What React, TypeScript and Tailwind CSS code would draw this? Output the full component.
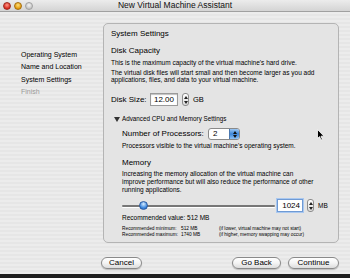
import React from 'react';

const font = { fontFamily: '"Liberation Sans", Arial, sans-serif' };

const steps = [
  { label: 'Operating System', done: true },
  { label: 'Name and Location', done: true },
  { label: 'System Settings', done: true },
  { label: 'Finish', done: false },
];

const Stepper: React.FC = () => (
  <div className="flex flex-col w-[7px] h-[13px] rounded-[3px] border border-[#8c8c8c] bg-gradient-to-b from-white to-[#dcdcdc] items-center justify-center gap-[2px]">
    <svg width="4" height="3" viewBox="0 0 4 3"><path d="M2 0 L4 3 L0 3 Z" fill="#222" /></svg>
    <svg width="4" height="3" viewBox="0 0 4 3"><path d="M0 0 L4 0 L2 3 Z" fill="#222" /></svg>
  </div>
);

const AquaButton: React.FC<{ label: string; w: string }> = ({ label, w }) => (
  <button className={`${w} h-[12px] rounded-full border border-[#8a8a8a] bg-gradient-to-b from-white via-[#f4f4f4] to-[#dcdcdc] text-[8px] leading-[10px] text-black shadow-[0_1px_1px_rgba(0,0,0,0.2)]`}>
    {label}
  </button>
);

export default function App() {
  return (
    <div
      style={font}
      className="relative w-[350px] h-[278px] overflow-hidden flex flex-col bg-[repeating-linear-gradient(0deg,#ececec_0px,#ececec_2px,#e6e6e6_2px,#e6e6e6_4px)] text-black"
    >
      {/* title bar */}
      <div className="relative h-[12px] shrink-0 flex items-center justify-center border-b border-[#a0a0a0] bg-gradient-to-b from-[#ececec] to-[#d4d4d4]">
        <div className="absolute left-[3px] top-[2px] flex gap-[3px]">
          <span className="w-[8px] h-[8px] rounded-full bg-[radial-gradient(circle_at_50%_35%,#ff9a8a,#d8261b_70%)] border border-[#9c2a20]" />
          <span className="w-[8px] h-[8px] rounded-full bg-[radial-gradient(circle_at_50%_35%,#ffe07a,#e29a0a_70%)] border border-[#a46d10]" />
          <span className="w-[8px] h-[8px] rounded-full bg-[radial-gradient(circle_at_50%_35%,#f4f4f4,#c4c4c4_70%)] border border-[#a0a0a0]" />
        </div>
        <span className="text-[8.5px] leading-[11px] text-[#111]">New Virtual Machine Assistant</span>
      </div>

      <div className="flex mt-[11px] h-[220px]">
        {/* sidebar */}
        <div className="w-[103px] shrink-0 pl-[21px] pt-[26px] flex flex-col">
          {steps.map((s) => (
            <div key={s.label} className={`h-[12.4px] leading-[12px] text-[7px] ${s.done ? 'text-black' : 'text-[#9a9a9a]'}`}>
              {s.label}
            </div>
          ))}
        </div>

        {/* panel */}
        <div className="w-[236px] h-[220px] rounded-[5px] border border-[#b4b4b4] bg-[#e4e4e4] flex flex-col pl-[7px] pr-[4px] text-black">
          <div className="mt-[5px] h-[10px] leading-[10px] text-[8px]">System Settings</div>
          <div className="mt-[7px] h-[10px] leading-[10px] text-[8px]">Disk Capacity</div>
          <div className="mt-[3px] h-[8px] leading-[8px] text-[6.5px] whitespace-nowrap">This is the maximum capacity of the virtual machine's hard drive.</div>
          <div className="mt-[2px] leading-[7px] text-[6.5px] whitespace-nowrap">
            The virtual disk files will start small and then become larger as you add
            <br />
            applications, files, and data to your virtual machine.
          </div>
          <div className="mt-[10px] h-[13px] flex items-center">
            <span className="text-[8px] w-[39px]">Disk Size:</span>
            <div className="w-[28px] h-[13px] bg-white border border-[#9a9a9a] shadow-[inset_0_1px_1px_rgba(0,0,0,0.25)] flex items-center justify-end pr-[3px] text-[8px]">12.00</div>
            <div className="ml-[4px]"><Stepper /></div>
            <span className="ml-[4px] text-[7.5px]">GB</span>
          </div>
          <div className="mt-[9px] h-[8px] flex items-center text-[6.3px]">
            <svg width="6" height="5" viewBox="0 0 6 5" className="ml-[3px]"><path d="M0 0 L6 0 L3 5 Z" fill="#333" /></svg>
            <span className="ml-[2px]">Advanced CPU and Memory Settings</span>
          </div>

          <div className="pl-[11px] flex flex-col">
            <div className="mt-[5px] h-[12px] flex items-center">
              <span className="text-[8px] w-[86px]">Number of Processors:</span>
              <div className="w-[32px] h-[12px] rounded-[3px] border border-[#8a8a8a] bg-white flex items-center overflow-hidden">
                <span className="flex-1 pl-[4px] text-[8px] leading-[10px]">2</span>
                <div className="w-[10px] h-full bg-gradient-to-b from-[#9cc7f2] via-[#3a86da] to-[#8fc2f5] flex flex-col items-center justify-center gap-[1px] border-l border-[#4a78b0]">
                  <svg width="4" height="3" viewBox="0 0 4 3"><path d="M2 0 L4 3 L0 3 Z" fill="#111" /></svg>
                  <svg width="4" height="3" viewBox="0 0 4 3"><path d="M0 0 L4 0 L2 3 Z" fill="#111" /></svg>
                </div>
              </div>
            </div>
            <div className="mt-[2px] h-[7px] leading-[7px] text-[6.5px] whitespace-nowrap">Processors visible to the virtual machine's operating system.</div>
            <div className="mt-[9px] h-[10px] leading-[10px] text-[8px]">Memory</div>
            <div className="mt-[2px] leading-[8px] text-[6.5px] whitespace-nowrap">
              Increasing the memory allocation of the virtual machine can
              <br />
              improve performance but will also reduce the performance of other
              <br />
              running applications.
            </div>
            <div className="mt-[5px] h-[13px] flex items-center">
              <div className="relative w-[153px] h-[13px] flex items-center">
                <div className="w-full h-[2px] rounded-full bg-[#777] shadow-[0_1px_0_#fff]" />
                <span className="absolute left-[17px] top-[2px] w-[9px] h-[9px] rounded-full border border-[#2a5aa0] bg-[radial-gradient(circle_at_50%_30%,#d6ecff,#3f8ae0_60%,#1d5fb8)]" />
              </div>
              <div className="ml-[2px] w-[26px] h-[13px] bg-white border border-[#6f9ad4] shadow-[0_0_0_1px_#a9c8f0] flex items-center justify-end pr-[2px] text-[8px]">1024</div>
              <div className="ml-[4px]"><Stepper /></div>
              <span className="ml-[4px] text-[6.5px]">MB</span>
            </div>
            <div className="mt-[2px] h-[8px] leading-[8px] text-[6.5px]">Recommended value: 512 MB</div>
            <div className="mt-[4px] leading-[6px] text-[4.8px] whitespace-nowrap flex flex-col">
              <div className="flex">
                <span className="w-[59px]">Recommended minimum:</span>
                <span className="w-[38px]">512 MB</span>
                <span>(if lower, virtual machine may not start)</span>
              </div>
              <div className="flex">
                <span className="w-[59px]">Recommended maximum:</span>
                <span className="w-[38px]">1740 MB</span>
                <span>(if higher, memory swapping may occur)</span>
              </div>
            </div>
          </div>
        </div>
      </div>

      {/* buttons */}
      <div className="mt-[14px] flex items-center pl-[101px] pr-[11px]">
        <AquaButton label="Cancel" w="w-[41px]" />
        <div className="flex-1" />
        <AquaButton label="Go Back" w="w-[49px]" />
        <div className="w-[7px]" />
        <AquaButton label="Continue" w="w-[51px]" />
      </div>

      <div className="mt-auto h-[4px] bg-[#1e1e1e]" />

      {/* mouse pointer */}
      <svg className="absolute left-[317px] top-[129px]" width="8" height="12" viewBox="0 0 8 12">
        <path d="M0.5 0.5 L0.5 9.5 L2.6 7.6 L4 11 L5.4 10.4 L4 7.2 L7 7.2 Z" fill="#000" stroke="#fff" strokeWidth="0.8" />
      </svg>
    </div>
  );
}
